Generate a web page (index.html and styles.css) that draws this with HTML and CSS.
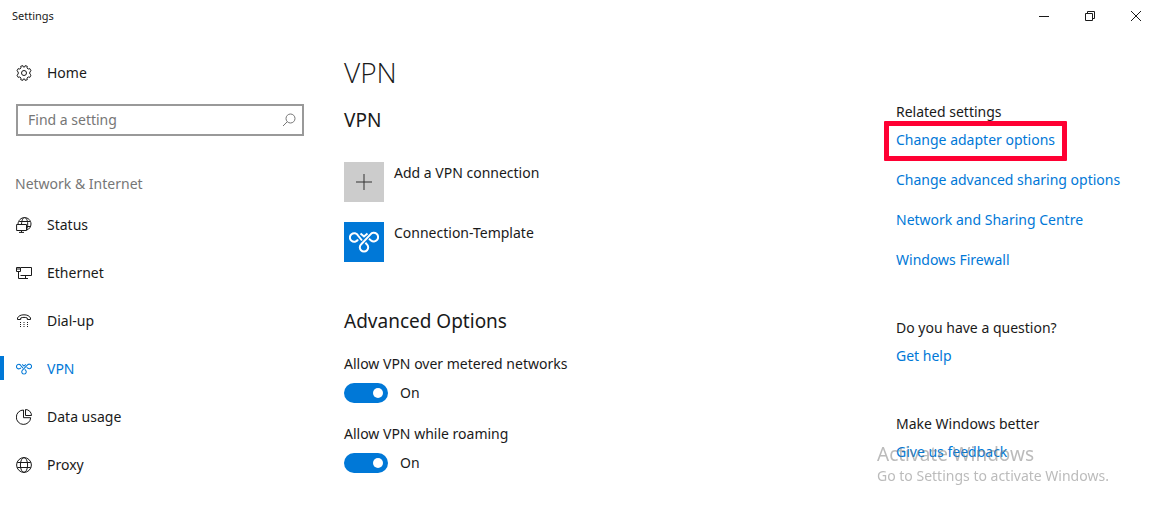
FILE: index.html
```html
<!DOCTYPE html>
<html lang="en-GB">
<head>
    <meta charset="UTF-8">
    <meta name="viewport" content="width=device-width, initial-scale=1.0">
    <title>Settings</title>
    <link rel="stylesheet" href="styles.css">
</head>
<body>

    <svg class="defs" aria-hidden="true">
        <symbol id="vpn-icon" viewBox="0 0 30 22">
            <path d="M13 9.5 L9 4.5 A4.3 4.3 0 1 0 9 8.5"/>
            <path d="M11.5 2.5 L15 5.5 L18.5 2.5"/>
            <path d="M20 7.8 L22 9.4 A4.3 4.3 0 1 0 21.5 3.4 L12.2 13.2 A4.2 4.2 0 1 0 17.8 13.2 L16.4 11.8"/>
        </symbol>
    </svg>

    <header class="titlebar">
        <span class="titlebar-text">Settings</span>
        <div class="window-buttons">
            <button type="button" aria-label="Minimise"><svg width="12" height="12" viewBox="0 0 12 12"><path d="M1 6.5H11"/></svg></button>
            <button type="button" aria-label="Restore"><svg width="12" height="12" viewBox="0 0 12 12"><path d="M1.5 3.5H8.5V10.5H1.5ZM3.5 3.5V1.5H10.5V8.5H8.5"/></svg></button>
            <button type="button" aria-label="Close"><svg width="12" height="12" viewBox="0 0 12 12"><path d="M1 1L11 11M11 1L1 11"/></svg></button>
        </div>
    </header>

    <div class="layout">
        <nav class="sidebar">
            <a class="nav-item" href="#home">
                <svg class="icon" viewBox="0 0 16 16"><circle cx="8" cy="8" r="2.5"/><path d="M6.8 .6 L7.3 2 H8.7 L9.2 .6 L11.3 1.3 L11 2.9 L12.2 4.1 L13.8 3.6 L15 5.8 L13.8 7 V9 L15 10.2 L13.8 12.4 L12.2 11.9 L11 13.1 L11.3 14.7 L9.2 15.4 L8.7 14 H7.3 L6.8 15.4 L4.7 14.7 L5 13.1 L3.8 11.9 L2.2 12.4 L1 10.2 L2.2 9 V7 L1 5.8 L2.2 3.6 L3.8 4.1 L5 2.9 L4.7 1.3 Z"/></svg>
                Home
            </a>
            <div class="search">
                <input type="text" placeholder="Find a setting" aria-label="Find a setting">
                <svg class="search-icon" viewBox="0 0 14 14"><circle cx="8.5" cy="5.5" r="4.5"/><path d="M5.2 8.8L1 13"/></svg>
            </div>

            <h3>Network &amp; Internet</h3>
            <a class="nav-item" href="#status">
                <svg class="icon" viewBox="0 0 16 16"><path d="M2 7 C2.3 3.4 5 .6 8.5 .6 C12.2 .6 15 3.4 15 7 C15 10 13.2 12.2 10.8 13 M5.5 7 C5.8 3 7 .6 8.5 .6 C10 .6 11.7 3 11.7 7 C11.7 9.5 11.3 11 10.8 12 M3.2 4.5H14.2M10.5 9.5H14.6M.6 7.5H10.5V13.5H.6ZM5.5 13.5V15.4M3 15.4H8"/></svg>
                Status
            </a>
            <a class="nav-item" href="#ethernet">
                <svg class="icon" viewBox="0 0 16 16"><path d="M5 2.5H15.5V10.5H4.5M.5 2.5H4.5V6.5H.5ZM.5 4H4.5M2.5 6.5V13.5H12M9.5 10.5V13.5"/></svg>
                Ethernet
            </a>
            <a class="nav-item" href="#dialup">
                <svg class="icon" viewBox="0 0 16 16"><path d="M1.5 6.5V5C2.5 2.8 5 1.8 8 1.8S13.5 2.8 14.5 5V6.5H11.3V5C9.5 4.2 6.5 4.2 4.7 5V6.5Z"/><path d="M4 9.5H5M7.5 9.5H8.5M11 9.5H12M4 11.5H5M7.5 11.5H8.5M11 11.5H12M4 13.5H5M7.5 13.5H8.5M11 13.5H12"/></svg>
                Dial-up
            </a>
            <a class="nav-item active" href="#vpn">
                <svg class="icon vpn" viewBox="0 0 30 22"><use href="#vpn-icon"/></svg>
                VPN
            </a>
            <a class="nav-item" href="#data">
                <svg class="icon" viewBox="0 0 16 16"><path d="M7.5 1A7.2 7.2 0 1 0 14.7 8.7H7.5ZM9.5 .5V6.5H15.5A6 6 0 0 0 9.5 .5Z"/></svg>
                Data usage
            </a>
            <a class="nav-item" href="#proxy">
                <svg class="icon" viewBox="0 0 16 16"><circle cx="8" cy="8" r="7.4"/><ellipse cx="8" cy="8" rx="3.6" ry="7.4"/><path d="M1.3 5.5H14.7M1.3 10.5H14.7"/></svg>
                Proxy
            </a>
        </nav>

        <main class="content">
            <h1>VPN</h1>
            <h2>VPN</h2>
            <div class="connections">
                <button type="button" class="connection">
                    <span class="tile add"><svg width="16" height="16" viewBox="0 0 16 16"><path d="M8 0V16M0 8H16"/></svg></span>
                    <span>Add a VPN connection</span>
                </button>
                <button type="button" class="connection">
                    <span class="tile"><svg class="vpn" width="30" height="22" viewBox="0 0 30 22"><use href="#vpn-icon"/></svg></span>
                    <span>Connection-Template</span>
                </button>
            </div>

            <h2 class="advanced">Advanced Options</h2>
            <div class="option">
                <label for="metered">Allow VPN over metered networks</label>
                <div class="switch"><input type="checkbox" id="metered" checked><span>On</span></div>
            </div>
            <div class="option">
                <label for="roaming">Allow VPN while roaming</label>
                <div class="switch"><input type="checkbox" id="roaming" checked><span>On</span></div>
            </div>
        </main>

        <aside class="related">
            <section>
                <h4>Related settings</h4>
                <a class="marked" href="#adapter">Change adapter options</a>
                <a href="#sharing">Change advanced sharing options</a>
                <a href="#centre">Network and Sharing Centre</a>
                <a href="#firewall">Windows Firewall</a>
            </section>
            <section>
                <h4>Do you have a question?</h4>
                <a href="#help">Get help</a>
            </section>
            <section>
                <h4>Make Windows better</h4>
                <a href="#feedback">Give us feedback</a>
            </section>
        </aside>
    </div>

    <div class="watermark">
        <p class="watermark-title">Activate Windows</p>
        <p>Go to Settings to activate Windows.</p>
    </div>

</body>
</html>
```
FILE: styles.css
```css
* { box-sizing: border-box; }
body {
    margin: 0;
    background: #fff;
    color: #1a1a1a;
    font-family: "Noto Sans", "Open Sans", sans-serif;
    font-size: 14px;
    line-height: 20px;
}
h1, h2, h3, h4, p { margin: 0; font-weight: 400; }
a { color: #0078d7; text-decoration: none; }
button { border: none; background: none; padding: 0; font: inherit; color: inherit; }
svg { fill: none; stroke: currentColor; stroke-width: 1; flex: none; }
.defs { position: absolute; width: 0; height: 0; }

/* title bar */
.titlebar { display: flex; justify-content: space-between; align-items: center; height: 32px; padding-left: 12px; }
.titlebar-text { font-size: 11px; }
.window-buttons { display: flex; }
.window-buttons button { width: 46px; height: 32px; display: flex; align-items: center; justify-content: center; }

.layout { display: grid; grid-template-columns: 320px 1fr 263px; }

/* sidebar */
.sidebar { padding-top: 17px; }
.nav-item { display: flex; align-items: center; gap: 15px; height: 48px; padding-left: 16px; color: #1a1a1a; }
.nav-item.active { position: relative; color: #0078d7; }
.nav-item.active::before { content: ""; position: absolute; left: 0; top: 11px; width: 4px; height: 24px; background: #0078d7; }
.icon { width: 16px; height: 16px; }
.icon.vpn { stroke-width: 2; }
.search { display: flex; align-items: center; height: 32px; margin: 7px 16px 0; padding: 0 6px 0 10px; border: 2px solid #999; color: #767676; }
.search input { flex: 1; min-width: 0; padding: 0; border: none; outline: none; background: none; font: inherit; }
.search input::placeholder { color: #767676; opacity: 1; }
.search-icon { width: 14px; height: 14px; }
.sidebar h3 { margin: 38px 0 7px; padding-left: 15px; font-size: 14px; color: #767676; }

/* main column */
.content { padding: 20px 24px; }
h1 { font-family: "Open Sans", sans-serif; font-size: 28px; line-height: 40px; font-weight: 300; }
h2 { margin-top: 14px; font-size: 19px; line-height: 28px; }
.connections { display: flex; flex-direction: column; gap: 20px; margin-top: 28px; }
.connection { display: flex; gap: 10px; text-align: left; line-height: 22px; }
.tile { display: flex; align-items: center; justify-content: center; width: 40px; height: 40px; background: #0078d7; color: #fff; }
.tile.add { background: #ccc; color: #333; }
.tile .vpn { stroke-width: 2; }
.advanced { margin: 45px 0 19px; }
.option { margin-bottom: 21px; }
.option label { display: block; margin-bottom: 9px; }
.switch { display: flex; align-items: center; gap: 12px; }
.switch input { appearance: none; position: relative; width: 44px; height: 20px; margin: 0; border-radius: 10px; background: #ccc; }
.switch input:checked { background: #0078d7; }
.switch input::before { content: ""; position: absolute; top: 5px; left: 5px; width: 10px; height: 10px; border-radius: 50%; background: #fff; }
.switch input:checked::before { left: 29px; }

/* related links */
.related { padding-top: 70px; }
.related section { display: flex; flex-direction: column; align-items: flex-start; gap: 20px; margin-bottom: 48px; }
.related h4 { font-size: 14px; margin-bottom: -12px; }
.marked { position: relative; }
.marked::after { content: ""; position: absolute; inset: -9px -12px -11px; border: 5px solid #ff0033; border-radius: 1px; }

.watermark { position: fixed; right: 16px; bottom: 22px; width: 266px; color: rgba(120, 120, 120, .5); pointer-events: none; }
.watermark-title { font-size: 19px; line-height: 24px; }
```
